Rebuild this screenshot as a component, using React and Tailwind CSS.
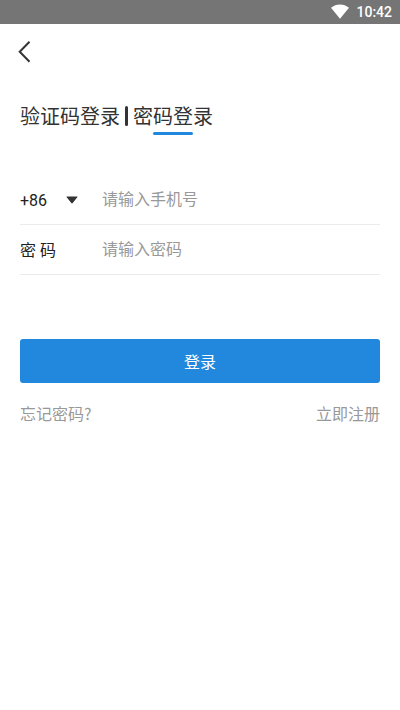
import React, { useState } from 'react';

const tabs = [
  { id: 'code', label: '验证码登录' },
  { id: 'password', label: '密码登录' },
];

const StatusBar = () => (
  <div className="flex h-6 items-center justify-end gap-1.5 bg-[#757575] pr-2 font-['Roboto',sans-serif] text-white">
    <svg className="h-5 w-5" viewBox="0 0 20 20" fill="currentColor" aria-hidden="true">
      <path d="M10 16.800 L1 5.700 C3.500 3.600 6.600 2.400 10 2.400 S16.500 3.600 19 5.700 Z" />
    </svg>
    <span className="text-sm font-medium">10:42</span>
  </div>
);

const App = () => {
  const [activeTab, setActiveTab] = useState('password');
  const [form, setForm] = useState({ area: '+86', phone: '', password: '' });

  const handleChange = (e) => {
    setForm({ ...form, [e.target.name]: e.target.value });
  };

  const handleSubmit = (e) => {
    e.preventDefault();
  };

  return (
    <div className="min-h-screen bg-white font-['Noto_Sans_CJK_SC',sans-serif] text-[#333333]">
      <StatusBar />

      {/* Header */}
      <header className="flex h-14 items-center px-3">
        <button type="button" aria-label="返回" className="flex h-6 w-6 items-center justify-center">
          <svg className="h-6 w-6" viewBox="0 0 24 24" fill="none" stroke="currentColor" strokeWidth="2" aria-hidden="true">
            <path d="M17.500 1.700 L7.700 11.700 L17.500 21.700" />
          </svg>
        </button>
      </header>

      <main className="px-5">
        {/* Login type */}
        <div className="flex h-14 items-start pt-5">
          {tabs.map((tab, index) => (
            <React.Fragment key={tab.id}>
              {index > 0 && <span className="mx-[5px] mt-[6px] h-5 w-[3px] rounded-sm bg-[#333333]" />}
              <button
                type="button"
                aria-pressed={activeTab === tab.id}
                onClick={() => setActiveTab(tab.id)}
                className="flex flex-col items-center text-xl leading-8"
              >
                {tab.label}
                {activeTab === tab.id && <span className="h-[3px] w-10 rounded-sm bg-[#2288dd]" />}
              </button>
            </React.Fragment>
          ))}
        </div>

        <form onSubmit={handleSubmit} className="mt-[39px]">
          {/* Phone */}
          <div className="flex h-[50px] items-center border-b border-[#ebebeb] font-['Roboto','Noto_Sans_CJK_SC',sans-serif]">
            <div className="relative mr-5 w-[62px] shrink-0 pt-0.5">
              <select
                name="area"
                aria-label="国家区号"
                value={form.area}
                onChange={handleChange}
                className="block w-full appearance-none bg-transparent text-base text-[#222222] outline-none"
              >
                <option value="+86">+86</option>
                <option value="+852">+852</option>
                <option value="+853">+853</option>
              </select>
              <svg className="pointer-events-none absolute top-[9px] right-1 h-2 w-3" viewBox="0 0 12 8" fill="currentColor" aria-hidden="true">
                <path d="M1 0.500 H11 Q12 0.500 11.300 1.300 L6.700 7 Q6 7.800 5.300 7 L0.700 1.300 Q0 0.500 1 0.500 Z" />
              </svg>
            </div>
            <input
              type="tel"
              name="phone"
              aria-label="手机号"
              value={form.phone}
              onChange={handleChange}
              placeholder="请输入手机号"
              className="min-w-0 flex-1 text-base outline-none placeholder:text-[#999999]"
            />
          </div>

          {/* Password */}
          <div className="flex h-[50px] items-center border-b border-[#ebebeb] font-['Roboto','Noto_Sans_CJK_SC',sans-serif]">
            <label htmlFor="password" className="mr-5 w-[62px] shrink-0 pt-0.5 text-base text-[#222222]">
              密 码
            </label>
            <input
              type="password"
              name="password"
              id="password"
              value={form.password}
              onChange={handleChange}
              placeholder="请输入密码"
              className="min-w-0 flex-1 text-base outline-none placeholder:text-[#999999]"
            />
          </div>

          <button type="submit" className="mt-16 h-11 w-full rounded-[3px] bg-[#2288dd] text-base text-white">
            登录
          </button>
        </form>

        <div className="mt-[18px] flex justify-between text-base text-[#999999]">
          <a href="#">忘记密码?</a>
          <a href="#">立即注册</a>
        </div>
      </main>
    </div>
  );
};

export default App;
